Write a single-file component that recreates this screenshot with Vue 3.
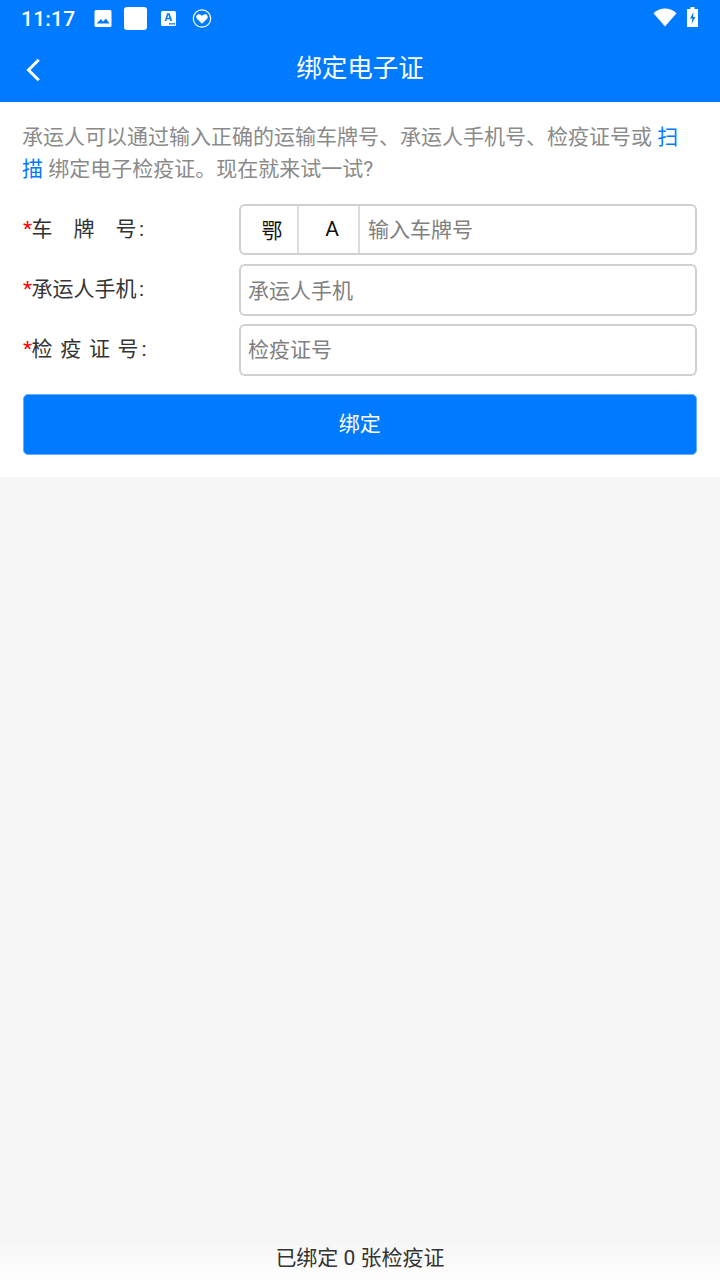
<script setup>
</script>

<template>
  <div class="page">
    <header class="header">
      <div class="status">
        <span class="time">11:17</span>
        <svg class="ic-pic" width="18" height="18" viewBox="0 0.5 18 18">
          <path fill="#fff" fill-rule="evenodd" d="M2 0.5h14a1.5 1.5 0 0 1 1.5 1.5v14a1.5 1.5 0 0 1-1.5 1.5H2A1.5 1.5 0 0 1 .5 16V2A1.5 1.5 0 0 1 2 .5zM2.5 14h13l-3.6-5-2.8 3.3L7 9.5z"/>
        </svg>
        <span class="square"></span>
        <svg class="ic-a" width="15" height="15" viewBox="0 0 15 15">
          <rect width="15" height="15" rx="1.5" fill="#fff"/>
          <path fill="#007aff" d="M6.2 2.2h2.4l2.6 7.7H9.4l-.5-1.6H5.8l-.5 1.6H3.6zM6.3 6.9h2.1L7.4 3.8z"/>
          <rect x="8" y="12" width="1.6" height="1.6" fill="#007aff"/>
          <rect x="10.2" y="12" width="1.6" height="1.6" fill="#007aff"/>
          <rect x="12.4" y="12" width="1.6" height="1.6" fill="#007aff"/>
        </svg>
        <svg class="ic-heart" width="20" height="20" viewBox="0 0.5 20 20">
          <circle cx="10" cy="10" r="8.7" fill="none" stroke="#fff" stroke-width="1.2"/>
          <path fill="#fff" d="M10 15.2 4.9 10.2C3.4 8.4 4.6 5.8 6.9 5.8c1.3 0 2.4.7 3.1 1.8.7-1.1 1.8-1.8 3.1-1.8 2.3 0 3.5 2.6 2 4.4z"/>
        </svg>
        <span class="grow"></span>
        <svg class="ic-wifi" width="24" height="20" viewBox="0 2 24 20">
          <path fill="#fff" d="M.5 6.2C3.6 3.4 7.6 1.6 12 1.6s8.4 1.8 11.5 4.6L12 19.4z"/>
        </svg>
        <svg class="ic-batt" width="14" height="20" viewBox="0 2 14 20">
          <path fill="#fff" fill-rule="evenodd" d="M4.5 0h4v2H12v18H1V2h3.5zM7.6 5 4 11.6h2.4L5.6 17l3.8-7H7z"/>
        </svg>
      </div>
      <div class="nav">
        <svg class="back" width="18" height="28" viewBox="0 0 18 28">
          <path d="M14.8 3.7 4.5 14l10.3 10.3" fill="none" stroke="#fff" stroke-width="3"/>
        </svg>
        <h1 class="title">绑定电子证</h1>
      </div>
    </header>

    <section class="card">
      <div class="intro">
        <p>承运人可以通过输入正确的运输车牌号、承运人手机号、检疫证号或 <span class="link">扫</span></p>
        <p><span class="link">描</span> 绑定电子检疫证。现在就来试一试?</p>
      </div>

      <div class="row row-first">
        <div class="label l1"><i>*</i><span>车</span><span>牌</span><span>号</span><b>:</b></div>
        <div class="field plate">
          <span class="cell c1">鄂</span>
          <span class="cell c2">A</span>
          <span class="ph">输入车牌号</span>
        </div>
      </div>
      <div class="row">
        <div class="label l2"><i>*</i><span>承运人手机</span><b>:</b></div>
        <div class="field"><span class="ph ph2">承运人手机</span></div>
      </div>
      <div class="row">
        <div class="label l3"><i>*</i><span>检</span><span>疫</span><span>证</span><span>号</span><b>:</b></div>
        <div class="field"><span class="ph">检疫证号</span></div>
      </div>

      <button class="bind">绑定</button>
    </section>

    <main class="rest"></main>
    <footer class="foot">已绑定 0 张检疫证</footer>
  </div>
</template>

<style>
body { margin: 0; }
</style>

<style scoped>
.page {
  width: 720px;
  height: 1280px;
  display: flex;
  flex-direction: column;
  overflow: hidden;
  background: #f6f6f6;
  font-family: "Roboto", "Noto Sans CJK SC", sans-serif;
}
.header { background: #007aff; color: #fff; height: 102px; flex: none; }
.status {
  height: 38px;
  display: flex;
  align-items: center;
  padding: 0 21px;
}
.status svg { overflow: visible; flex: none; }
.time { font-size: 21px; font-weight: 500; letter-spacing: .2px; width: 72.5px; }
.ic-pic { margin-right: 12.5px; }
.square { width: 23px; height: 23px; border-radius: 3px; background: #fff; margin: -1px 14px 0 0; }
.ic-a { margin: -1px 15.5px 0 0; }
.grow { flex: 1; }
.ic-wifi { margin-right: 9px; }
.ic-batt { margin-right: -1px; }
.nav {
  height: 60px;
  display: flex;
  align-items: center;
  justify-content: center;
  position: relative;
}
.back { position: absolute; left: 24px; top: 18px; }
.title { margin: 0; font-size: 25.5px; font-weight: 400; line-height: 59px; }

.card { background: #fff; padding: 19px 23px 22px; flex: none; }
.intro { margin: 0 0 19px -1px; font-size: 21px; line-height: 32px; color: #8a8a8a; }
.intro p { margin: 0; white-space: nowrap; }
.link { color: #007aff; }
.row { display: flex; align-items: flex-start; margin-bottom: 8px; }
.label {
  width: 216px;
  flex: none;
  display: flex;
  font-size: 21px;
  line-height: 50px;
  color: #333;
}
.label i { color: #f00; font-style: normal; width: 8.5px; }
.label b { font-weight: 400; }
.l1 span { width: 21px; margin-right: 21px; }
.l1 span:nth-of-type(3) { margin-right: 2.5px; }
.l2 span { margin-right: 2.5px; }
.l3 span { width: 21px; margin-right: 7.7px; }
.l3 span:nth-of-type(4) { margin-right: 3px; }
.field {
  flex: 1;
  box-sizing: border-box;
  height: 52px;
  border: 2px solid #d0d0d0;
  border-radius: 6px;
  display: flex;
  align-items: center;
  padding-left: 7px;
  font-size: 21px;
}
.row-first { margin-bottom: 9px; }
.plate { height: 51px; padding-left: 0; }
.ph { color: #808080; padding-bottom: 4px; }
.ph2 { padding-bottom: 2px; }
.cell {
  height: 100%;
  display: flex;
  align-items: center;
  justify-content: center;
  color: #111;
  border-right: 2px solid #dcdcdc;
  box-sizing: border-box;
  padding-bottom: 1px;
}
.c1 { width: 58px; padding-left: 6px; }
.c2 { width: 61px; padding-left: 7px; }
.plate .ph { margin-left: 8px; }
.bind {
  display: block;
  width: calc(100% + 0.5px);
  height: 61px;
  margin: 18px 0 0 -0.5px;
  border: 1px solid #66afff;
  border-radius: 5px;
  background: #007aff;
  color: #fff;
  font: inherit;
  font-size: 21px;
  padding: 0 0 6px;
}
.rest { flex: 1; }
.foot {
  flex: none;
  height: 44px;
  text-align: center;
  font-size: 21px;
  line-height: 44px;
  color: #333;
  background: linear-gradient(#f6f6f6, #f6f6f6 10%, #fefefe);
}
</style>
